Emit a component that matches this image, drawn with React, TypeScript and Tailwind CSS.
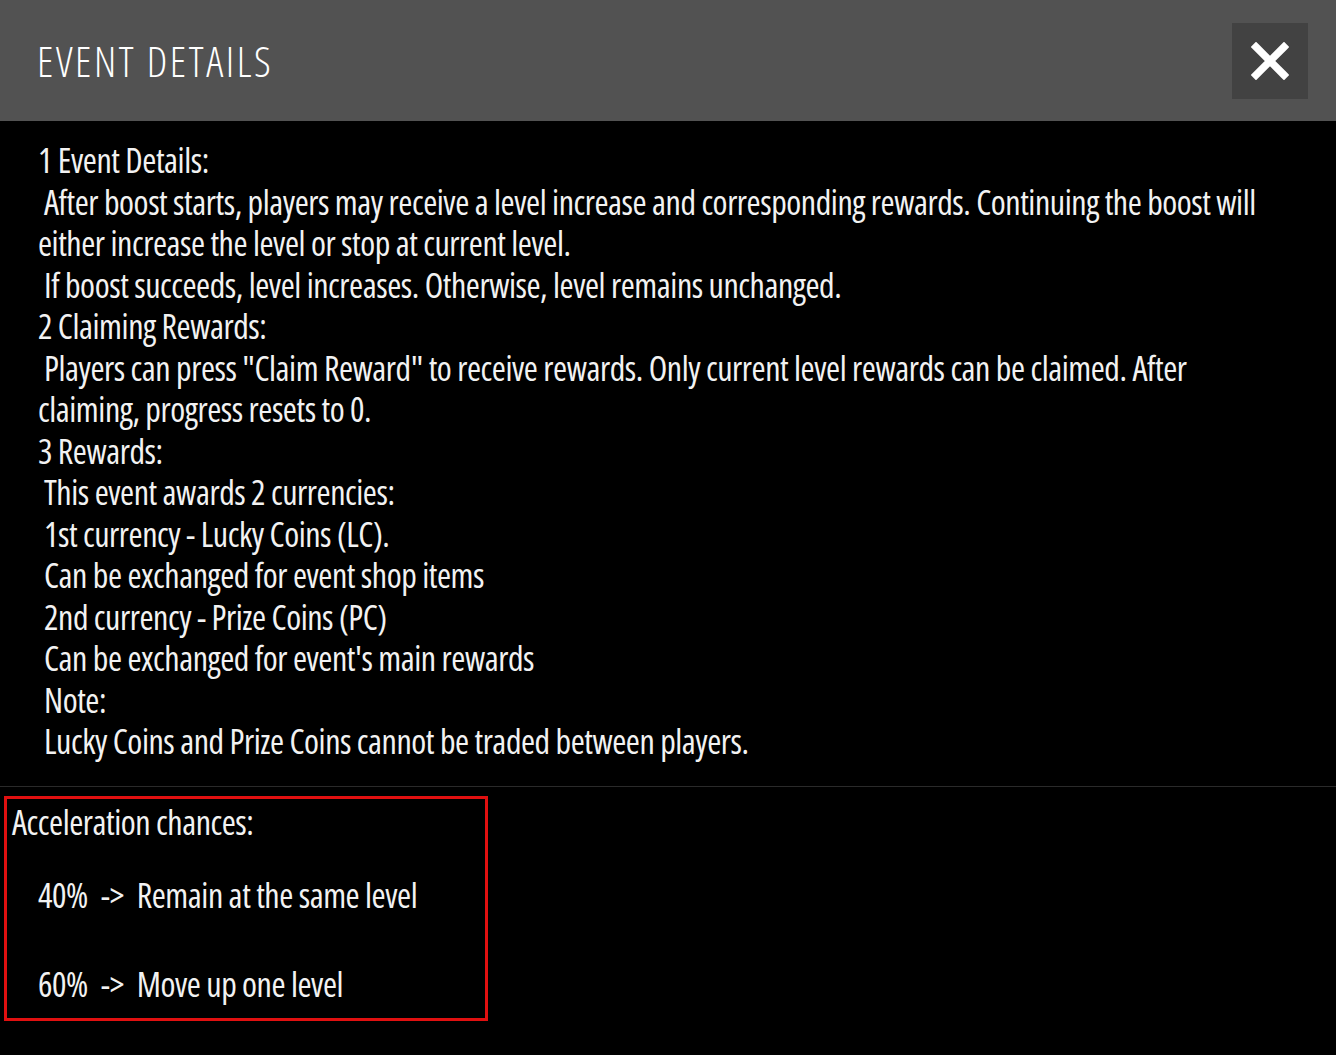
const lines: { text: string; indent: boolean }[] = [
  { text: "1 Event Details:", indent: false },
  {
    text: "After boost starts, players may receive a level increase and corresponding rewards. Continuing the boost will",
    indent: true,
  },
  { text: "either increase the level or stop at current level.", indent: false },
  { text: "If boost succeeds, level increases. Otherwise, level remains unchanged.", indent: true },
  { text: "2 Claiming Rewards:", indent: false },
  {
    text: "Players can press \"Claim Reward\" to receive rewards. Only current level rewards can be claimed. After",
    indent: true,
  },
  { text: "claiming, progress resets to 0.", indent: false },
  { text: "3 Rewards:", indent: false },
  { text: "This event awards 2 currencies:", indent: true },
  { text: "1st currency - Lucky Coins (LC).", indent: true },
  { text: "Can be exchanged for event shop items", indent: true },
  { text: "2nd currency - Prize Coins (PC)", indent: true },
  { text: "Can be exchanged for event's main rewards", indent: true },
  { text: "Note:", indent: true },
  { text: "Lucky Coins and Prize Coins cannot be traded between players.", indent: true },
];

function CloseIcon() {
  return (
    <svg width="38" height="38" viewBox="0 0 38 38" fill="none">
      <path d="M5 5 L33 33 M33 5 L5 33" stroke="#ffffff" strokeWidth="7.5" strokeLinecap="square" />
    </svg>
  );
}

export default function App() {
  return (
    <div className="w-[1336px] h-[1055px] bg-black font-['Open_Sans',sans-serif] font-stretch-condensed text-[#f2f2f2] flex flex-col overflow-hidden">
      <header className="h-[121px] shrink-0 bg-[#525252] flex items-center justify-between pl-[37px] pr-[28px]">
        <h1 className="text-[42px] tracking-[2.6px] leading-none font-light text-white">EVENT DETAILS</h1>
        <button className="w-[76px] h-[76px] bg-[#424242] flex items-center justify-center">
          <CloseIcon />
        </button>
      </header>

      <div className="pl-[38px] pt-[19px] text-[34px] leading-[41.5px] tracking-[-0.45px] whitespace-nowrap">
        {lines.map((l, i) => (
          <div key={i} className={l.indent ? "pl-[6px]" : ""}>
            {l.text}
          </div>
        ))}
      </div>

      <div className="mt-[23px] h-px bg-[#2a2a2a]" />

      <div className="ml-[4px] mt-[9px] w-[484px] h-[225px] border-[3px] border-[#e01010] pl-[5px] pt-[3px] text-[34px] leading-[41.5px] tracking-[-0.45px] whitespace-nowrap">
        <div>Acceleration chances:</div>
        <div className="mt-[32px] ml-[26px] flex gap-[13px]">
          <span>40%</span>
          <span>-&gt;</span>
          <span>Remain at the same level</span>
        </div>
        <div className="mt-[47px] ml-[26px] flex gap-[13px]">
          <span>60%</span>
          <span>-&gt;</span>
          <span>Move up one level</span>
        </div>
      </div>
    </div>
  );
}
